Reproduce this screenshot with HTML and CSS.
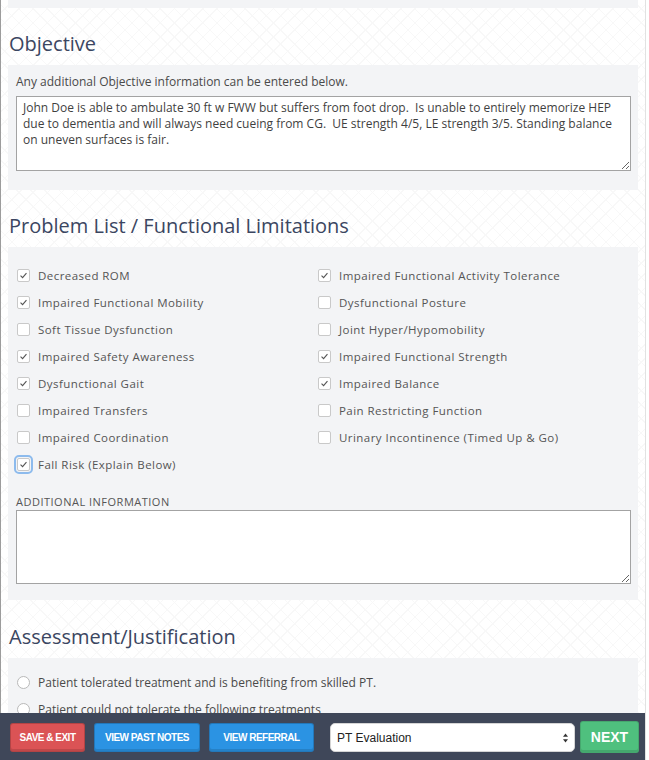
FILE: index.html
```html
<!DOCTYPE html>
<html>
<head>
<meta charset="utf-8">
<link rel="stylesheet" href="styles.css">
</head>
<body>
<div class="page">
  <div class="panel stub"></div>

  <h2 class="section-title">Objective</h2>
  <div class="panel">
    <p class="hint">Any additional Objective information can be entered below.</p>
    <textarea class="note obj" readonly>John Doe is able to ambulate 30 ft w FWW but suffers from foot drop.  Is unable to entirely memorize HEP due to dementia and will always need cueing from CG.  UE strength 4/5, LE strength 3/5. Standing balance on uneven surfaces is fair.</textarea>
  </div>

  <h2 class="section-title">Problem List / Functional Limitations</h2>
  <div class="panel problems">
    <div class="check-grid">
      <div class="check-col">
        <div class="check-row"><span class="box on"><svg viewBox="0 0 13 13"><path d="M3 6.6 L5.4 9 L10 3.6"/></svg></span><span class="lbl">Decreased ROM</span></div>
        <div class="check-row"><span class="box on"><svg viewBox="0 0 13 13"><path d="M3 6.6 L5.4 9 L10 3.6"/></svg></span><span class="lbl">Impaired Functional Mobility</span></div>
        <div class="check-row"><span class="box"></span><span class="lbl">Soft Tissue Dysfunction</span></div>
        <div class="check-row"><span class="box on"><svg viewBox="0 0 13 13"><path d="M3 6.6 L5.4 9 L10 3.6"/></svg></span><span class="lbl">Impaired Safety Awareness</span></div>
        <div class="check-row"><span class="box on"><svg viewBox="0 0 13 13"><path d="M3 6.6 L5.4 9 L10 3.6"/></svg></span><span class="lbl">Dysfunctional Gait</span></div>
        <div class="check-row"><span class="box"></span><span class="lbl">Impaired Transfers</span></div>
        <div class="check-row"><span class="box"></span><span class="lbl">Impaired Coordination</span></div>
        <div class="check-row"><span class="box on focus"><svg viewBox="0 0 13 13"><path d="M3 6.6 L5.4 9 L10 3.6"/></svg></span><span class="lbl">Fall Risk (Explain Below)</span></div>
      </div>
      <div class="check-col">
        <div class="check-row"><span class="box on"><svg viewBox="0 0 13 13"><path d="M3 6.6 L5.4 9 L10 3.6"/></svg></span><span class="lbl">Impaired Functional Activity Tolerance</span></div>
        <div class="check-row"><span class="box"></span><span class="lbl">Dysfunctional Posture</span></div>
        <div class="check-row"><span class="box"></span><span class="lbl">Joint Hyper/Hypomobility</span></div>
        <div class="check-row"><span class="box on"><svg viewBox="0 0 13 13"><path d="M3 6.6 L5.4 9 L10 3.6"/></svg></span><span class="lbl">Impaired Functional Strength</span></div>
        <div class="check-row"><span class="box on"><svg viewBox="0 0 13 13"><path d="M3 6.6 L5.4 9 L10 3.6"/></svg></span><span class="lbl">Impaired Balance</span></div>
        <div class="check-row"><span class="box"></span><span class="lbl">Pain Restricting Function</span></div>
        <div class="check-row"><span class="box"></span><span class="lbl">Urinary Incontinence (Timed Up &amp; Go)</span></div>
      </div>
    </div>
    <div class="field-label">ADDITIONAL INFORMATION</div>
    <textarea class="note addl" readonly></textarea>
  </div>

  <h2 class="section-title assess-title">Assessment/Justification</h2>
  <div class="panel assess">
    <div class="radio-row"><span class="radio"></span><span class="rlbl">Patient tolerated treatment and is benefiting from skilled PT.</span></div>
    <div class="radio-row"><span class="radio"></span><span class="rlbl">Patient could not tolerate the following treatments</span></div>
  </div>
</div>

<div class="action-bar">
  <button class="btn btn-red">SAVE &amp; EXIT</button>
  <button class="btn btn-blue btn-notes">VIEW PAST NOTES</button>
  <button class="btn btn-blue btn-ref">VIEW REFERRAL</button>
  <div class="select">
    <span class="select-text">PT Evaluation</span>
    <svg class="select-arrows" viewBox="0 0 6 11"><path d="M3 0 L6 4 L0 4 Z"/><path d="M0 7 L6 7 L3 11 Z"/></svg>
  </div>
  <button class="btn btn-green">NEXT</button>
</div>
</body>
</html>
```

FILE: styles.css
```css
* { box-sizing: border-box; }

html, body {
  margin: 0;
  padding: 0;
  background: #fff;
}

body {
  font-family: "Open Sans", "Liberation Sans", sans-serif;
  color: #4f4f4f;
}

.page {
  width: 646px;
  min-height: 760px;
  padding: 0 7px 40px;
  border-left: 1px solid #9c9c9c;
  border-right: 1px solid #e2e2e2;
  background-color: #fff;
  background-image:
    repeating-linear-gradient(45deg, transparent 0 9px, #f8f8f8 9px 10px),
    repeating-linear-gradient(-45deg, transparent 0 9px, #f8f8f8 9px 10px);
}

.panel {
  background: #f3f4f6;
  padding: 9px 8px 19px;
}

.panel.stub {
  height: 8px;
  padding: 0;
}

.section-title {
  margin: 0;
  padding: 24px 0 9px 1px;
  font-size: 20px;
  line-height: 24px;
  font-weight: 400;
  color: #3b4661;
}

.assess-title { padding-top: 25px; }

.hint {
  margin: 0;
  font-size: 12px;
  line-height: 16px;
  color: #4a4a4a;
}

.note {
  display: block;
  width: 615px;
  margin: 6px 0 0;
  padding: 3px 6px;
  border: 1px solid #a3a3a3;
  border-radius: 0;
  background: #fff;
  font-family: "Open Sans", "Liberation Sans", sans-serif;
  font-size: 12px;
  line-height: 16px;
  color: #3f3f3f;
  outline: none;
}

.note.obj { height: 75px; }

.problems { padding: 15px 8px 16px; }

.check-grid {
  display: grid;
  grid-template-columns: 301px 1fr;
}

.check-row {
  height: 27px;
  display: flex;
  align-items: center;
  padding-left: 1px;
}

.box {
  width: 13px;
  height: 13px;
  flex: none;
  border: 1px solid #c9c9c9;
  border-radius: 2px;
  background: #fff;
  margin-right: 8px;
  display: flex;
}

.box svg {
  width: 11px;
  height: 11px;
  fill: none;
  stroke: #555;
  stroke-width: 1.3;
}

.box.focus {
  outline: 2px solid #8dbbed;
  outline-offset: 1px;
}

.lbl {
  font-size: 11.5px;
  letter-spacing: 0.45px;
  color: #555;
}

.field-label {
  margin-top: 16px;
  font-size: 11px;
  line-height: 16px;
  letter-spacing: 0.5px;
  color: #555;
}

.note.addl {
  margin-top: 0;
  height: 74px;
}

.assess { padding-top: 11px; }

.radio-row {
  height: 27px;
  display: flex;
  align-items: center;
  padding-left: 1px;
}

.radio {
  width: 13px;
  height: 13px;
  flex: none;
  border: 1px solid #b9b9b9;
  border-radius: 50%;
  background: #fff;
  margin-right: 8px;
}

.rlbl {
  font-size: 12px;
  color: #4a4a4a;
}

.action-bar {
  position: fixed;
  left: 0;
  bottom: 0;
  width: 645px;
  height: 47px;
  background: #3f4759;
  display: flex;
  align-items: flex-start;
  padding: 10px 0 0 10px;
}

.btn {
  height: 29px;
  border: 1px solid rgba(0, 0, 0, 0.18);
  border-radius: 3px;
  box-shadow: inset 0 -2px 0 rgba(0, 0, 0, 0.12);
  color: #fff;
  font-family: "Liberation Sans", Arial, sans-serif;
  font-weight: 700;
  font-size: 10px;
  letter-spacing: -0.5px;
  padding: 0;
  cursor: pointer;
}

.btn-red { width: 75px; background: #db5355; margin-right: 9px; }
.btn-blue { background: #2b93e3; }
.btn-notes { width: 106px; margin-right: 9px; }
.btn-ref { width: 105px; margin-right: 16px; }

.select {
  width: 245px;
  height: 29px;
  background: #fff;
  border-radius: 5px;
  border: 1px solid #d5d5d5;
  display: flex;
  align-items: center;
  justify-content: space-between;
  padding: 0 6px 0 6px;
  margin-right: 5px;
}

.select-text {
  font-family: "Liberation Sans", Arial, sans-serif;
  font-size: 12px;
  color: #222;
}

.select-arrows {
  width: 5px;
  height: 10px;
  fill: #333;
}

.btn-green {
  width: 59px;
  height: 32px;
  margin-top: -2px;
  background: #4fc07e;
  font-size: 14px;
  letter-spacing: 0;
  border-color: rgba(0, 0, 0, 0.12);
}
```
